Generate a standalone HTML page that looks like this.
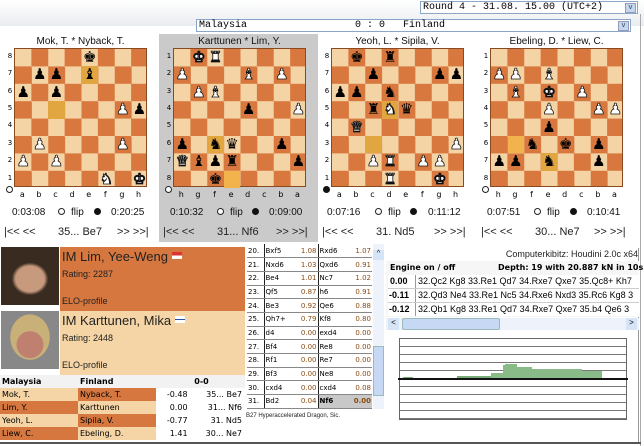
<!DOCTYPE html>
<html><head><meta charset="utf-8"><style>
*{margin:0;padding:0;box-sizing:border-box}
body{width:644px;height:446px;overflow:hidden;background:#fff;font-family:"Liberation Sans","DejaVu Sans",sans-serif;position:relative}
.a{position:absolute;white-space:nowrap}
.top{left:0;top:0;width:644px;height:26px;background:linear-gradient(#fff,#e9ecef)}
.sel{border:1px solid #8aa6c8;background:#fff;font-family:"Liberation Mono",monospace;font-size:10px;line-height:12px;padding-left:2px}
.dd{position:absolute;right:1px;top:1px;width:11px;height:10px;background:#c5d6ef;border:1px solid #99b;font-size:7px;line-height:8px;text-align:center;color:#345}
.board{position:absolute;width:133px;height:139.2px;border:1px solid #8a4a20;background:conic-gradient(#d8783e 0 25%,#f4d3a4 0 50%,#d8783e 0 75%,#f4d3a4 0);background-size:33.25px 34.8px}
.board span{position:absolute;width:16.6px;height:17.4px;line-height:17.4px;text-align:center;font-family:"DejaVu Sans",sans-serif;font-size:15px}
.board i{position:absolute;width:16.6px;height:17.4px;background:#e1a640}
.w{color:#fff;-webkit-text-stroke:0.8px #111}
.k{color:#000}
.c0{left:0}.c1{left:16.6px}.c2{left:33.2px}.c3{left:49.8px}.c4{left:66.4px}.c5{left:83px}.c6{left:99.6px}.c7{left:116.2px}
.r0{top:0}.r1{top:17.4px}.r2{top:34.8px}.r3{top:52.2px}.r4{top:69.6px}.r5{top:87px}.r6{top:104.4px}.r7{top:121.8px}
.t{font-size:10px;color:#111}
.rk{position:absolute;font-size:7px;font-family:"DejaVu Sans",sans-serif;width:8px;text-align:center}
.fl{position:absolute;font-size:8px;font-family:"DejaVu Sans",sans-serif;width:16.6px;text-align:center}
.clk{font-size:10px;color:#111}
.oc{width:7px;height:7px;border-radius:50%;border:1.5px solid #222;background:#fff}
.bc{width:7px;height:7px;border-radius:50%;background:#111}
.nav{font-size:11px;color:#222}
.mt{border-collapse:collapse;position:absolute;left:247px;top:244px;width:125px;table-layout:fixed}
.mt td{font-size:7px;height:13.7px;padding:0 1px;border-bottom:1px solid #888;font-family:"DejaVu Sans",sans-serif;overflow:hidden;white-space:nowrap}
.mt td.n{border-right:1px solid #222}
.mt td.e{border-right:1px solid #222}
.ev{color:#8a4a10;text-align:right}
.tb td{font-size:8px;height:13px;font-family:"DejaVu Sans",sans-serif;padding-left:2px}
.L{background:#f5d5a6}.D{background:#d6773f}
</style></head><body>
<div class="a top"></div>
<div class="a sel" style="left:420px;top:1px;width:218px;height:13px">Round 4 - 31.08. 15.00 (UTC+2)<div class="dd">v</div></div>
<div class="a sel" style="left:196px;top:19px;width:435px;height:13px">Malaysia&nbsp;&nbsp;&nbsp;&nbsp;&nbsp;&nbsp;&nbsp;&nbsp;&nbsp;&nbsp;&nbsp;&nbsp;&nbsp;&nbsp;&nbsp;&nbsp;&nbsp;&nbsp;0 : 0&nbsp;&nbsp;&nbsp;Finland<div class="dd">v</div></div>
<div class="a" style="left:640px;top:14px;width:1px;height:432px;background:#aaa"></div>
<div class="a" style="left:159px;top:34px;width:159px;height:208px;background:#cacaca"></div>

<div class="a t" style="left:14px;top:36px;width:133px;text-align:center">Mok, T. * Nyback, T.</div>
<div class="a t" style="left:173px;top:36px;width:133px;text-align:center">Karttunen * Lim, Y.</div>
<div class="a t" style="left:331px;top:36px;width:133px;text-align:center">Yeoh, L. * Sipila, V.</div>
<div class="a t" style="left:490px;top:36px;width:133px;text-align:center">Ebeling, D. * Liew, C.</div>

<div class="board" style="left:14px;top:48px">
<i class="c4 r1"></i><i class="c2 r3"></i>
<span class="k c4 r0">♚</span>
<span class="k c1 r1">♟</span><span class="k c2 r1">♟</span><span class="k c4 r1">♝</span>
<span class="k c0 r2">♟</span><span class="k c2 r2">♟</span>
<span class="w c6 r3">♟</span><span class="k c7 r3">♟</span>
<span class="w c1 r5">♟</span><span class="w c6 r5">♟</span>
<span class="w c0 r6">♟</span><span class="w c2 r6">♟</span>
<span class="w c5 r7">♞</span><span class="w c7 r7">♚</span>
</div>
<div class="board" style="left:173px;top:48px">
<i class="c2 r5"></i><i class="c3 r7" style="background:#f2b24c"></i>
<span class="w c1 r0">♚</span><span class="w c2 r0">♜</span>
<span class="w c0 r1">♟</span><span class="w c4 r1">♝</span><span class="w c6 r1">♟</span>
<span class="w c1 r2">♟</span><span class="w c2 r2">♝</span>
<span class="k c4 r3">♟</span><span class="w c7 r3">♟</span>
<span class="k c0 r5">♟</span><span class="k c2 r5">♞</span><span class="k c3 r5">♛</span><span class="k c6 r5">♟</span>
<span class="w c0 r6">♛</span><span class="k c1 r6">♝</span><span class="k c2 r6">♟</span><span class="k c3 r6">♜</span><span class="k c7 r6">♟</span>
<span class="k c2 r7">♚</span>
</div>
<div class="board" style="left:331px;top:48px">
<i class="c3 r3"></i><i class="c2 r5"></i>
<span class="k c1 r0">♚</span><span class="k c3 r0">♜</span>
<span class="k c2 r1">♟</span><span class="k c6 r1">♟</span><span class="k c7 r1">♟</span>
<span class="k c0 r2">♟</span><span class="k c1 r2">♟</span><span class="k c3 r2">♞</span>
<span class="k c2 r3">♜</span><span class="w c3 r3">♞</span><span class="k c4 r3">♛</span>
<span class="w c1 r4">♛</span>
<span class="w c7 r5">♟</span>
<span class="w c2 r6">♟</span><span class="w c3 r6">♜</span><span class="w c5 r6">♟</span><span class="w c6 r6">♟</span>
<span class="w c3 r7">♜</span><span class="w c6 r7">♚</span>
</div>
<div class="board" style="left:490px;top:48px">
<i class="c1 r5" style="background:#f2b24c"></i><i class="c3 r6"></i>
<span class="w c0 r1">♟</span><span class="w c1 r1">♟</span><span class="w c3 r1">♝</span>
<span class="w c1 r2">♝</span><span class="w c3 r2">♚</span><span class="w c5 r2">♟</span>
<span class="w c3 r3">♟</span><span class="w c6 r3">♟</span><span class="w c7 r3">♟</span>
<span class="k c3 r4">♟</span>
<span class="k c2 r5">♞</span><span class="k c4 r5">♚</span><span class="k c6 r5">♟</span>
<span class="k c0 r6">♟</span><span class="k c1 r6">♟</span><span class="k c3 r6">♞</span><span class="k c6 r6">♟</span>
</div>

<div class="a" style="left:6px;top:48px;width:8px;height:140px">
<div class="rk" style="top:4px">8</div><div class="rk" style="top:21px">7</div><div class="rk" style="top:39px">6</div><div class="rk" style="top:56px">5</div><div class="rk" style="top:73px">4</div><div class="rk" style="top:91px">3</div><div class="rk" style="top:108px">2</div><div class="rk" style="top:126px">1</div></div>
<div class="a" style="left:165px;top:48px;width:8px;height:140px">
<div class="rk" style="top:4px">1</div><div class="rk" style="top:21px">2</div><div class="rk" style="top:39px">3</div><div class="rk" style="top:56px">4</div><div class="rk" style="top:73px">5</div><div class="rk" style="top:91px">6</div><div class="rk" style="top:108px">7</div><div class="rk" style="top:126px">8</div></div>
<div class="a" style="left:323px;top:48px;width:8px;height:140px">
<div class="rk" style="top:4px">8</div><div class="rk" style="top:21px">7</div><div class="rk" style="top:39px">6</div><div class="rk" style="top:56px">5</div><div class="rk" style="top:73px">4</div><div class="rk" style="top:91px">3</div><div class="rk" style="top:108px">2</div><div class="rk" style="top:126px">1</div></div>
<div class="a" style="left:482px;top:48px;width:8px;height:140px">
<div class="rk" style="top:4px">1</div><div class="rk" style="top:21px">2</div><div class="rk" style="top:39px">3</div><div class="rk" style="top:56px">4</div><div class="rk" style="top:73px">5</div><div class="rk" style="top:91px">6</div><div class="rk" style="top:108px">7</div><div class="rk" style="top:126px">8</div></div>

<div class="a" style="left:14px;top:190px;width:133px;height:10px"><div class="fl c0">a</div><div class="fl c1">b</div><div class="fl c2">c</div><div class="fl c3">d</div><div class="fl c4">e</div><div class="fl c5">f</div><div class="fl c6">g</div><div class="fl c7">h</div></div>
<div class="a" style="left:173px;top:190px;width:133px;height:10px"><div class="fl c0">h</div><div class="fl c1">g</div><div class="fl c2">f</div><div class="fl c3">e</div><div class="fl c4">d</div><div class="fl c5">c</div><div class="fl c6">b</div><div class="fl c7">a</div></div>
<div class="a" style="left:331px;top:190px;width:133px;height:10px"><div class="fl c0">a</div><div class="fl c1">b</div><div class="fl c2">c</div><div class="fl c3">d</div><div class="fl c4">e</div><div class="fl c5">f</div><div class="fl c6">g</div><div class="fl c7">h</div></div>
<div class="a" style="left:490px;top:190px;width:133px;height:10px"><div class="fl c0">h</div><div class="fl c1">g</div><div class="fl c2">f</div><div class="fl c3">e</div><div class="fl c4">d</div><div class="fl c5">c</div><div class="fl c6">b</div><div class="fl c7">a</div></div>
<div class="a oc" style="left:6px;top:186px"></div>
<div class="a oc" style="left:165px;top:186px"></div>
<div class="a bc" style="left:323px;top:186px"></div>
<div class="a oc" style="left:482px;top:186px"></div>

<div class="a clk" style="left:12px;top:207px">0:03:08</div><div class="a oc" style="left:58px;top:208px"></div><div class="a clk" style="left:71px;top:207px">flip</div><div class="a bc" style="left:94px;top:208px"></div><div class="a clk" style="left:111px;top:207px">0:20:25</div>
<div class="a clk" style="left:170px;top:207px">0:10:32</div><div class="a oc" style="left:217px;top:208px"></div><div class="a clk" style="left:230px;top:207px">flip</div><div class="a bc" style="left:252px;top:208px"></div><div class="a clk" style="left:269px;top:207px">0:09:00</div>
<div class="a clk" style="left:327px;top:207px">0:07:16</div><div class="a oc" style="left:375px;top:208px"></div><div class="a clk" style="left:388px;top:207px">flip</div><div class="a bc" style="left:410px;top:208px"></div><div class="a clk" style="left:428px;top:207px">0:11:12</div>
<div class="a clk" style="left:487px;top:207px">0:07:51</div><div class="a oc" style="left:534px;top:208px"></div><div class="a clk" style="left:547px;top:207px">flip</div><div class="a bc" style="left:570px;top:208px"></div><div class="a clk" style="left:587px;top:207px">0:10:41</div>

<div class="a nav" style="left:4px;top:226px">|&lt;&lt; &lt;&lt;</div><div class="a nav" style="left:58px;top:226px">35... Be7</div><div class="a nav" style="left:117px;top:226px">&gt;&gt; &gt;&gt;|</div>
<div class="a nav" style="left:163px;top:226px">|&lt;&lt; &lt;&lt;</div><div class="a nav" style="left:217px;top:226px">31... Nf6</div><div class="a nav" style="left:276px;top:226px">&gt;&gt; &gt;&gt;|</div>
<div class="a nav" style="left:322px;top:226px">|&lt;&lt; &lt;&lt;</div><div class="a nav" style="left:376px;top:226px">31. Nd5</div><div class="a nav" style="left:434px;top:226px">&gt;&gt; &gt;&gt;|</div>
<div class="a nav" style="left:481px;top:226px">|&lt;&lt; &lt;&lt;</div><div class="a nav" style="left:535px;top:226px">30... Ne7</div><div class="a nav" style="left:594px;top:226px">&gt;&gt; &gt;&gt;|</div>

<div class="a" style="left:0;top:244px;width:246px;height:3px;background:#fff"></div>
<div class="a" style="left:1px;top:247px;width:58px;height:58px;background:radial-gradient(ellipse 45% 40% at 50% 55%,#c79a7e 0 55%,#3a2b20 70%),#5a4030"></div>
<div class="a" style="left:1px;top:311px;width:58px;height:58px;background:radial-gradient(ellipse 38% 38% at 50% 58%,#c08070 0 60%,transparent 62%),radial-gradient(ellipse 48% 55% at 50% 45%,#c9b078 0 70%,#888 72%),#777"></div>
<div class="a D" style="left:60px;top:247px;width:185px;height:64px"></div>
<div class="a L" style="left:60px;top:311px;width:185px;height:64px"></div>
<div class="a" style="left:62px;top:249px;font-size:13px;color:#222">IM Lim, Yee-Weng <span style="display:inline-block;width:10px;height:7px;background:linear-gradient(#d33 0 50%,#fff 0);vertical-align:2px"></span></div>
<div class="a" style="left:62px;top:269px;font-size:9px;color:#222">Rating: 2287</div>
<div class="a" style="left:62px;top:296px;font-size:9px;color:#222">ELO-profile</div>
<div class="a" style="left:62px;top:313px;font-size:13px;color:#222">IM Karttunen, Mika <span style="display:inline-block;width:10px;height:7px;background:linear-gradient(#fff 0 40%,#2255aa 0 60%,#fff 0);vertical-align:2px"></span></div>
<div class="a" style="left:62px;top:333px;font-size:9px;color:#222">Rating: 2448</div>
<div class="a" style="left:62px;top:360px;font-size:9px;color:#222">ELO-profile</div>
<table class="a tb" style="left:0;top:375px;width:245px;border-collapse:collapse">
<tr style="background:#f2f2f2"><td style="width:78px;font-weight:bold">Malaysia</td><td style="width:78px;font-weight:bold">Finland</td><td colspan="2" style="text-align:center;font-weight:bold">0-0</td></tr>
<tr><td class="L">Mok, T.</td><td class="D">Nyback, T.</td><td style="text-align:right">-0.48</td><td style="text-align:right;padding-right:3px">35... Be7</td></tr>
<tr><td class="D">Lim, Y.</td><td class="L">Karttunen</td><td style="text-align:right">0.00</td><td style="text-align:right;padding-right:3px">31... Nf6</td></tr>
<tr><td class="L">Yeoh, L.</td><td class="D">Sipila, V.</td><td style="text-align:right">-0.77</td><td style="text-align:right;padding-right:3px">31. Nd5</td></tr>
<tr><td class="D">Liew, C.</td><td class="L">Ebeling, D.</td><td style="text-align:right">1.41</td><td style="text-align:right;padding-right:3px">30... Ne7</td></tr>
</table>

<table class="mt">
<colgroup><col style="width:17px"><col style="width:33px"><col style="width:21px"><col style="width:33px"><col style="width:21px"></colgroup>
<tr><td class="n">20.</td><td>Bxf5</td><td class="ev e">1.08</td><td>Rxd6</td><td class="ev">1.07</td></tr>
<tr><td class="n">21.</td><td>Nxd6</td><td class="ev e">1.03</td><td>Qxd6</td><td class="ev">0.91</td></tr>
<tr><td class="n">22.</td><td>Be4</td><td class="ev e">1.01</td><td>Nc7</td><td class="ev">1.02</td></tr>
<tr><td class="n">23.</td><td>Qf5</td><td class="ev e">0.87</td><td>h6</td><td class="ev">0.91</td></tr>
<tr><td class="n">24.</td><td>Be3</td><td class="ev e">0.92</td><td>Qe6</td><td class="ev">0.88</td></tr>
<tr><td class="n">25.</td><td>Qh7+</td><td class="ev e">0.79</td><td>Kf8</td><td class="ev">0.80</td></tr>
<tr><td class="n">26.</td><td>d4</td><td class="ev e">0.00</td><td>exd4</td><td class="ev">0.00</td></tr>
<tr><td class="n">27.</td><td>Bf4</td><td class="ev e">0.00</td><td>Re8</td><td class="ev">0.00</td></tr>
<tr><td class="n">28.</td><td>Rf1</td><td class="ev e">0.00</td><td>Re7</td><td class="ev">0.00</td></tr>
<tr><td class="n">29.</td><td>Bf3</td><td class="ev e">0.00</td><td>Ne8</td><td class="ev">0.00</td></tr>
<tr><td class="n">30.</td><td>cxd4</td><td class="ev e">0.00</td><td>cxd4</td><td class="ev">0.08</td></tr>
<tr><td class="n">31.</td><td>Bd2</td><td class="ev e">0.04</td><td style="background:#c8c8c8;font-weight:bold">Nf6</td><td class="ev" style="background:#c8c8c8;font-weight:bold">0.00</td></tr>
</table>
<div class="a" style="left:373px;top:244px;width:11px;height:165px;background:#eef3fb"></div>
<div class="a" style="left:373px;top:346px;width:11px;height:50px;background:#c6d8f4;border:1px solid #9bb"></div>
<div class="a" style="left:373px;top:250px;width:11px;height:10px;background:#d6e4f8;font-size:7px;text-align:center">^</div>
<div class="a" style="left:246px;top:413px;font-size:6px;color:#222">B27 Hyperaccelerated Dragon, Sic.</div>

<div class="a" style="left:386px;top:248px;width:253px;height:194px;background:#fff;border-right:1px solid #999"></div>
<div class="a" style="left:386px;top:261px;width:253px;height:56px;background:#f6f6f6"></div>
<div class="a" style="left:420px;top:249px;width:218px;text-align:right;font-size:9px;color:#222">Computerkibitz: Houdini 2.0c x64</div>
<div class="a" style="left:390px;top:263px;font-size:8px;font-weight:bold;font-family:'DejaVu Sans',sans-serif">Engine on / off</div>
<div class="a" style="left:498px;top:263px;font-size:8px;font-weight:bold;font-family:'DejaVu Sans',sans-serif">Depth: 19 with 20.887 kN in 10s</div>
<div class="a" style="left:388px;top:275px;width:251px;height:41px;background:#fff"></div>
<div class="a" style="left:415px;top:275px;width:1px;height:41px;background:#999"></div>
<div class="a" style="left:388px;top:288px;width:251px;height:1px;background:#ccc"></div>
<div class="a" style="left:388px;top:302px;width:251px;height:1px;background:#ccc"></div>
<div class="a" style="left:390px;top:276px;font-size:9px;font-weight:bold">0.00</div>
<div class="a" style="left:389px;top:290px;font-size:9px;font-weight:bold">-0.11</div>
<div class="a" style="left:389px;top:304px;font-size:9px;font-weight:bold">-0.12</div>
<div class="a" style="left:418px;top:276px;font-size:9px;width:221px;overflow:hidden">32.Qc2 Kg8 33.Re1 Qd7 34.Rxe7 Qxe7 35.Qc8+ Kh7</div>
<div class="a" style="left:418px;top:290px;font-size:9px;width:221px;overflow:hidden">32.Qd3 Ne4 33.Re1 Nc5 34.Rxe6 Nxd3 35.Rc6 Kg8 3</div>
<div class="a" style="left:418px;top:304px;font-size:9px;width:221px;overflow:hidden">32.Qb1 Kg8 33.Re1 Qd7 34.Rxe7 Qxe7 35.b4 Qe6 3</div>
<div class="a" style="left:386px;top:318px;width:253px;height:12px;background:#eef3fb"></div>
<div class="a" style="left:402px;top:318px;width:98px;height:12px;background:#c6d8f4;border:1px solid #9bb;border-radius:2px"></div>
<div class="a" style="left:388px;top:318px;width:11px;height:12px;background:#d6e4f8;font-size:8px;text-align:center">&lt;</div>
<div class="a" style="left:626px;top:318px;width:11px;height:12px;background:#d6e4f8;font-size:8px;text-align:center">&gt;</div>
<div class="a" style="left:399px;top:338px;width:228px;height:82px;border:1px solid #666;background:repeating-linear-gradient(#fff 0 7px,#777 7px 8px)"></div>
<div class="a" style="left:403px;top:377px;width:10px;height:2px;background:#7a7"></div>
<div class="a" style="left:457px;top:376px;width:40px;height:3px;background:#7a7"></div>
<div class="a" style="left:491px;top:373px;width:12px;height:6px;background:#8b8"></div>
<div class="a" style="left:503px;top:365px;width:12px;height:14px;background:#8b8"></div>
<div class="a" style="left:505px;top:364px;width:12px;height:15px;background:#8b8"></div>
<div class="a" style="left:517px;top:367px;width:15px;height:12px;background:#8b8"></div>
<div class="a" style="left:532px;top:369px;width:50px;height:10px;background:#8b8"></div>
<div class="a" style="left:582px;top:371px;width:20px;height:8px;background:#8b8"></div>
<div class="a" style="left:398px;top:378px;width:230px;height:2px;background:#111"></div>
<div class="a" style="left:0;top:442px;width:641px;height:2px;background:#555"></div>
</body></html>
